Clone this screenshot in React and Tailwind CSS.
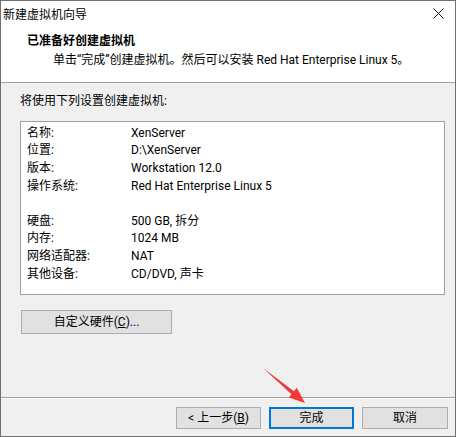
import React from "react";

const rows = [
  ["名称:", "XenServer"],
  ["位置:", "D:\\XenServer"],
  ["版本:", "Workstation 12.0"],
  ["操作系统:", "Red Hat Enterprise Linux 5"],
  null,
  ["硬盘:", "500 GB, 拆分"],
  ["内存:", "1024 MB"],
  ["网络适配器:", "NAT"],
  ["其他设备:", "CD/DVD, 声卡"],
];

export default function App() {
  return (
    <div className="relative w-[456px] h-[437px] border border-[#707070] bg-[#f0f0f0] flex flex-col font-['Roboto','Noto_Sans_CJK_SC',sans-serif] text-[12px] leading-[16px] text-black">
      {/* header (white) */}
      <div className="h-[82px] bg-white border-b border-[#a0a0a0] flex flex-col">
        <div className="h-[27px] flex items-center justify-between pl-[2px] pr-[11px]">
          <span>新建虚拟机向导</span>
          <svg width="11" height="11" viewBox="0 0 11 11" className="mt-[-2px]">
            <path d="M0.5 0.5 L10.5 10.5 M10.5 0.5 L0.5 10.5" stroke="#111" strokeWidth="1" fill="none" />
          </svg>
        </div>
        <div className="mt-[5px] pl-[26px] font-bold">已准备好创建虚拟机</div>
        <div className="mt-[3px] pl-[52px]">单击“完成”创建虚拟机。然后可以安装 Red Hat Enterprise Linux 5。</div>
      </div>

      {/* body */}
      <div className="flex-1 flex flex-col pt-[10px] pl-[19px] pr-[10px]">
        <div>将使用下列设置创建虚拟机:</div>
        <div className="mt-[12px] w-[425px] h-[174px] bg-white border border-[#a0a0a0] pt-[2px] pl-[6px]">
          {rows.map((r, i) =>
            r ? (
              <div key={i} className="flex h-[17.6px] items-center">
                <span className="w-[104px] shrink-0">{r[0]}</span>
                <span>{r[1]}</span>
              </div>
            ) : (
              <div key={i} className="h-[17.6px]" />
            )
          )}
        </div>
        <button className="mt-[15px] ml-px w-[151px] h-[24px] bg-[#e1e1e1] border border-[#adadad] flex items-center justify-center">
          <span>
            自定义硬件(<span className="underline">C</span>)...
          </span>
        </button>
      </div>

      {/* footer */}
      <div className="h-[39px] border-t border-[#a0a0a0] flex flex-col">
        <div className="h-px bg-white" />
        <div className="flex justify-end gap-[8px] pr-[7px] pt-[8px]">
          <button className="w-[85px] h-[22px] bg-[#e1e1e1] border border-[#adadad] flex items-center justify-center">
            <span>
              &lt; 上一步(<span className="underline">B</span>)
            </span>
          </button>
          <button className="w-[85px] h-[22px] bg-[#e1e1e1] border-2 border-[#0078d7] flex items-center justify-center">
            完成
          </button>
          <button className="w-[86px] h-[22px] bg-[#e1e1e1] border border-[#adadad] flex items-center justify-center">
            取消
          </button>
        </div>
      </div>

      {/* red annotation arrow */}
      <svg
        className="absolute left-[-1px] top-[-1px] pointer-events-none"
        width="456"
        height="437"
        viewBox="0 0 456 437"
      >
        <polygon
          points="263,368 294,391.3 296.8,387.8 305,403 288.6,397.6 291.4,394.3"
          fill="#f03a3a"
        />
      </svg>
    </div>
  );
}
